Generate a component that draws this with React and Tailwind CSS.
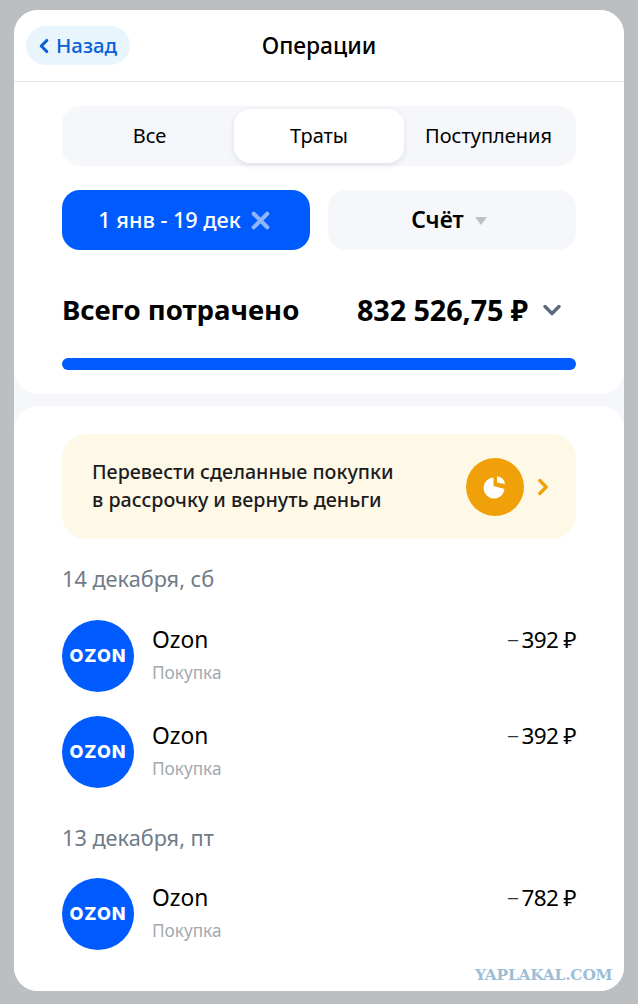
import React from 'react';
import { ChevronLeft, ChevronRight, ChevronDown, X } from 'lucide-react';

const GROUPS = [
  {
    date: '14 декабря, сб',
    items: [{ amount: '392' }, { amount: '392' }],
  },
  {
    date: '13 декабря, пт',
    items: [{ amount: '782' }],
  },
];

function OzonLogo() {
  return (
    <div className="w-[72px] h-[72px] rounded-full bg-[#005bff] flex items-center justify-center shrink-0">
      <span className="text-white text-[18px] font-extrabold leading-none tracking-[1px] font-['Inter',sans-serif]">OZON</span>
    </div>
  );
}

function Operation({ amount }) {
  return (
    <div className="h-[72px] flex items-start gap-[18px]">
      <OzonLogo />
      <div className="flex-1 pt-[6px]">
        <div className="text-[22.8px] leading-[28px] text-black">Ozon</div>
        <div className="text-[17.2px] leading-[22px] mt-[8px] text-[#a3a9b1]">Покупка</div>
      </div>
      <div className="pt-[6px] text-[22.5px] leading-[28px] text-black flex gap-[3px] tracking-[-0.6px]">
        <span className="font-light text-[24px] leading-[24px] text-[#333]">–</span>
        <span>{amount} ₽</span>
      </div>
    </div>
  );
}

export default function App() {
  return (
    <div className="relative w-[638px] h-[1004px] bg-[#bcbfc2] pt-[10px] px-[14px] pb-[13px] font-['Noto_Sans',sans-serif]">
      <div className="h-full rounded-[24px] bg-[#f5f7fa] overflow-hidden flex flex-col gap-[12px]">
        {/* top block */}
        <div className="bg-white rounded-b-[24px] h-[384px] shrink-0">
          <div className="relative h-[72px] border-b border-[#e4e7ec] flex items-center justify-center">
            <div className="absolute left-[12px] top-[16px] h-[39px] w-[104px] rounded-full bg-[#e9f5fd] flex items-center pl-[7px] gap-[1px] text-[#0a5fd8]">
              <ChevronLeft size={22} strokeWidth={3.4} />
              <span className="text-[20.4px] font-medium leading-none">Назад</span>
            </div>
            <span className="text-[22.8px] font-medium text-black mt-[2px]">Операции</span>
          </div>

          <div className="px-[48px] pt-[24px]">
            <div className="h-[60px] rounded-[18px] bg-[#f5f7fa] p-[3px] flex items-stretch text-[20px] text-black">
              <div className="w-[169px] flex items-center justify-center">Все</div>
              <div className="w-[170px] flex items-center justify-center bg-white rounded-[16px] shadow-[0_2px_6px_rgba(20,30,50,0.10)]">Траты</div>
              <div className="flex-1 flex items-center justify-center">Поступления</div>
            </div>

            <div className="mt-[24px] flex gap-[18px]">
              <div className="w-[248px] h-[60px] rounded-[18px] bg-[#005bff] text-white flex items-center justify-center gap-[6px]">
                <span className="text-[21.6px] font-medium">1 янв - 19 дек</span>
                <X size={27} strokeWidth={3.6} className="text-[#8fb6fb]" />
              </div>
              <div className="flex-1 h-[60px] rounded-[18px] bg-[#f5f7fa] flex items-center justify-center gap-[11px] pr-[6px]">
                <span className="text-[22.8px] font-semibold text-black">Счёт</span>
                <svg width="12" height="8" viewBox="0 0 12 8" className="mt-[2px]">
                  <path d="M0 0h12L6 8z" fill="#bcc1c8" />
                </svg>
              </div>
            </div>

            <div className="mt-[40px] flex items-center h-[40px]">
              <span className="text-[27.6px] font-bold text-black leading-none">Всего потрачено</span>
              <span className="ml-auto text-[28.8px] font-bold text-black leading-none tracking-[-0.1px]">832 526,75 ₽</span>
              <ChevronDown size={28} strokeWidth={3} className="text-[#5d6b7c] ml-[10px] mr-[10px]" />
            </div>

            <div className="mt-[28px] h-[12px] rounded-full bg-[#005bff]" />
          </div>
        </div>

        {/* operations */}
        <div className="flex-1 bg-white rounded-t-[24px] px-[48px] pt-[28px]">
          <div className="h-[105px] rounded-[24px] bg-[#fef8e7] flex items-center pl-[30px]">
            <div className="flex-1 text-[19.7px] leading-[28px] font-medium text-[#1c1c1c] -mt-[2px]">
              Перевести сделанные покупки
              <br />
              в рассрочку и вернуть деньги
            </div>
            <div className="w-[58px] h-[58px] rounded-full bg-[#f0a10a] flex items-center justify-center">
              <svg width="24" height="24" viewBox="0 0 24 24">
                <path d="M10.5 2.5a10.5 10.5 0 1 0 11 11.5l-11-3z" fill="#fff" />
                <path d="M14 1.5a8 8 0 0 1 8 7.5l-8-1.6z" fill="#fff" />
              </svg>
            </div>
            <ChevronRight size={26} strokeWidth={3} className="text-[#f0a10a] ml-[6px] mr-[20px]" />
          </div>

          {GROUPS.map((group, i) => (
            <div key={group.date}>
              <div className={`text-[21.7px] leading-[28px] text-[#6f7b88] ${i === 0 ? 'mt-[26px]' : 'mt-[36px]'}`}>{group.date}</div>
              <div className={`flex flex-col gap-[24px] ${i === 0 ? 'mt-[27px]' : 'mt-[26px]'}`}>
                {group.items.map((item, j) => (
                  <Operation key={j} amount={item.amount} />
                ))}
              </div>
            </div>
          ))}
        </div>
      </div>

      {/* watermark */}
      <div className="absolute left-[475px] top-[966px] text-[15.4px] leading-[18px] font-bold text-[#9dbdd6] font-['DejaVu_Serif',serif] tracking-[-0.2px]">YAPLAKAL.COM</div>
    </div>
  );
}
